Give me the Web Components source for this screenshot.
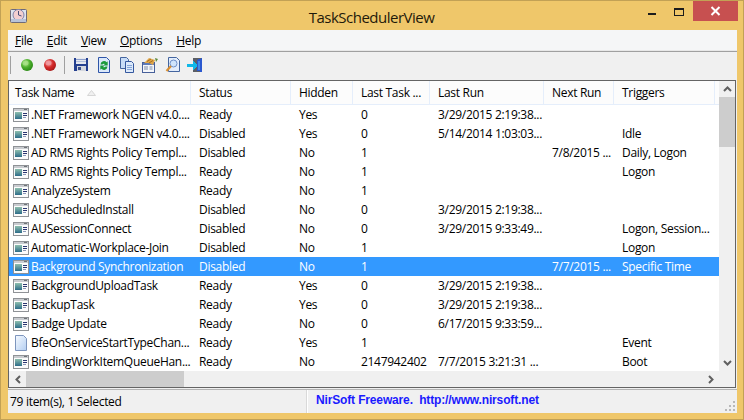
<!DOCTYPE html>
<html><head><meta charset="utf-8"><style>
html,body{margin:0;padding:0;background:#efc76a;overflow:hidden}
body{font:12px "Open Sans","Noto Sans","Liberation Sans",sans-serif;color:#000;letter-spacing:-.3px}
</style></head><body>
<app-window>
<title-bar slot="title">TaskSchedulerView</title-bar>
<menu-bar slot="menu"></menu-bar>
<tool-bar slot="tools"></tool-bar>
<task-list slot="list"></task-list>
<status-bar slot="status"></status-bar>
</app-window>
<script>
const ICON = {
 ball:(c1,c2,c3,h)=>`<svg width="14" height="14" viewBox="0 0 14 14"><defs><radialGradient id="g${c2.slice(1)}" cx=".38" cy=".34" r=".68"><stop offset="0" stop-color="${c1}"/><stop offset=".55" stop-color="${c2}"/><stop offset="1" stop-color="${c3}"/></radialGradient></defs><circle cx="7" cy="7" r="6" fill="url(#g${c2.slice(1)})"/><ellipse cx="5.500" cy="5" rx="3" ry="2.500" fill="${h}" opacity=".75"/></svg>`,
 save:`<svg width="16" height="15" viewBox="0 0 16 15" shape-rendering="crispEdges"><path d="M1 1h13l1 1v12H1z" fill="#25408f"/><rect x="3" y="1" width="10" height="6" fill="#e6e8ee"/><rect x="3" y="2" width="10" height="1" fill="#8ea0cc"/><rect x="3" y="4" width="10" height="1" fill="#b4c0dc"/><rect x="4" y="9" width="9" height="5" fill="#d4d7de"/><rect x="5" y="10" width="3" height="3" fill="#3a4f8c"/></svg>`,
 refresh:`<svg width="16" height="16" viewBox="0 0 16 16"><path d="M2.500 .5h8l3 3v12h-11z" fill="#dbe8fa" stroke="#2f55a8"/><path d="M4.500 7.500a3.600 3.600 0 0 1 6.200-2.300l1-1v4.300H7.400l1.500-1.400a1.900 1.900 0 0 0-2.500.4z" fill="#1c9a3c"/><path d="M11.500 9.500a3.600 3.600 0 0 1-6.200 2.300l-1 1V8.500h4.300l-1.500 1.400a1.900 1.900 0 0 0 2.500-.4z" fill="#1c9a3c"/></svg>`,
 copy:`<svg width="16" height="16" viewBox="0 0 16 16"><path d="M1.500 .5h6l2 2v9h-8z" fill="#c8dcf6" stroke="#44659f"/><path d="M6.500 4.500h6l2 2v9h-8z" fill="#dce9fa" stroke="#35589f"/><path d="M8 8.500h5M8 10.500h5M8 12.500h5" stroke="#86a6d8"/></svg>`,
 props:`<svg width="18" height="16" viewBox="0 0 18 16"><rect x="1.500" y="5.500" width="12" height="10" fill="#f4f6fa" stroke="#47609a"/><rect x="2" y="6" width="11" height="2" fill="#5d7ab8"/><path d="M3 10h4M3 12h4M8.500 10h3M8.500 12h3" stroke="#7a8aa8"/><path d="M3 6l5-5 6 2-2 5-4-2z" fill="#e0a648"/><path d="M6 4.500l4-2.500M8 6l4-2.500" stroke="#a86f1e"/><path d="M14 1l3 1-2 3z" fill="#5f8a3c"/></svg>`,
 find:`<svg width="16" height="16" viewBox="0 0 16 16"><path d="M3.500 .5h8l3 3v11h-11z" fill="#e3edfb" stroke="#44659f"/><circle cx="8.500" cy="6.500" r="3.500" fill="#cfe4fb" stroke="#6f90c8"/><path d="M6 9l-4.500 5" stroke="#d98f32" stroke-width="2.200"/></svg>`,
 exit:`<svg width="17" height="16" viewBox="0 0 17 16" shape-rendering="crispEdges"><rect x="6" y="1" width="9" height="14" fill="#5c5f66"/><path d="M10 3l5-2v14l-5-1z" fill="#2a58cf"/><rect x="11" y="4" width="2" height="9" fill="#3f8fe8"/><rect x="0" y="7" width="7" height="3" fill="#10b8e8"/><path d="M6 4h1v1h1v1h1v1h1v3H9v1H8v1H7v1H6z" fill="#10b8e8"/></svg>`,
 app:`<svg width="17" height="15" viewBox="0 0 17 15"><rect x=".5" y="1.500" width="16" height="13" rx="1" fill="#dfe4ee" stroke="#6e6a78"/><circle cx="8.500" cy="7" r="5.500" fill="#f3cfd0" stroke="#7f84a8"/><path d="M8.500 3v4l3 1" stroke="#4a4f78" fill="none"/><rect x="1" y="11" width="15" height="3" fill="#b9c3d8"/></svg>`,
 task:`<svg width="16" height="14" viewBox="0 0 16 14" shape-rendering="crispEdges"><defs><linearGradient id="t" x1="0" y1="0" x2="0" y2="1"><stop offset="0" stop-color="#8fbfae"/><stop offset="1" stop-color="#2c6c88"/></linearGradient></defs><rect width="16" height="14" fill="#8f9296"/><rect x="1" y="3" width="14" height="10" fill="#fbfbfb"/><rect x="1" y="1" width="14" height="2" fill="#c9ccd0"/><rect x="11" y="1" width="3" height="1" fill="#6f7378"/><rect x="2" y="4" width="7" height="7" fill="url(#t)"/><rect x="10" y="5" width="4" height="1" fill="#2a3570"/><rect x="10" y="7" width="4" height="1" fill="#2a3570"/><rect x="10" y="9" width="3" height="1" fill="#8a98b8"/></svg>`,
 doc:`<svg width="16" height="16" viewBox="0 0 16 16"><defs><linearGradient id="d" x1="0" y1="0" x2="1" y2="1"><stop offset="0" stop-color="#f6faff"/><stop offset="1" stop-color="#b4cff2"/></linearGradient></defs><path d="M2.500 .5h8l3 3v12h-11z" fill="url(#d)" stroke="#7d95bd"/></svg>`
};
function def(name, css, html, init){
 customElements.define(name, class extends HTMLElement{
  connectedCallback(){
   if(this.shadowRoot) return;
   const r=this.attachShadow({mode:'open'});
   r.innerHTML=`<style>${css}</style>`+(typeof html==='function'?html(this):html);
   if(init) init(r,this);
  }
 });
}
def('app-window',`:host{display:flex;flex-direction:column;box-sizing:border-box;width:744px;height:420px;background:#efc76a;border:1px solid #c2a155;padding:0 6px 6px 7px}
.client{display:flex;flex-direction:column;height:382px;background:#f0f0f0;}`,
`<slot name="title"></slot><div class="client"><slot name="menu"></slot><slot name="tools"></slot><slot name="list"></slot><slot name="status"></slot></div>`);
def('title-bar',`:host{display:flex;align-items:center;height:29px;position:relative;flex:none;font:15px "Open Sans","Noto Sans",sans-serif;color:#1f1a0a}
.ic{position:absolute;left:2px;top:7px;display:flex}
.t{flex:1;text-align:center;padding-top:2px;padding-right:2px;letter-spacing:-.5px}
.b{position:absolute;top:0;display:flex;align-items:center;justify-content:center}
.min{left:640px;top:12px;width:8px;height:2px;background:#1c1c1c}
.max{left:666px;top:7px;width:10px;height:8px;box-sizing:border-box;border:1px solid #1c1c1c;border-top-width:2px}
.close{right:-1px;width:45px;height:20px;background:#c75050}`,
`<span class="ic">${ICON.app}</span><span class="t"><slot></slot></span><span class="b min"></span><span class="b max"></span><span class="b close"><svg width="11" height="10" viewBox="0 0 11 10"><path d="M1.500 1l8 8M9.500 1l-8 8" stroke="#fff" stroke-width="2"/></svg></span>`);
def('menu-bar',`:host{display:flex;flex:none;box-sizing:border-box;height:22px;background:#f5f6f7;border-bottom:1px solid #a0a0a0;padding:1px 0 0 6px;gap:14px;box-shadow:inset 0 -1px 0 #e8e8e8;line-height:20px}
u{text-decoration:underline;text-underline-offset:1px}
span:nth-child(2){margin-left:1px}`,
()=>['File','Edit','View','Options','Help'].map(m=>`<span><u>${m[0]}</u>${m.slice(1)}</span>`).join(''));
def('tool-bar',`:host{display:flex;flex:none;align-items:center;box-sizing:border-box;height:28px;background:#f0f0f0;padding:0 0 3px 2px}
.sep{width:1px;height:18px;background:#a0a0a0;flex:none}
.i{display:flex;justify-content:center;align-items:center;width:23px;height:18px;flex:none}
.sp{flex:none}`,
`<span class="sep"></span><span class="sp" style="width:4px"></span><span class="i">${ICON.ball('#b8f090','#4cae2c','#2a8a14','#a8e088')}</span><span class="i">${ICON.ball('#f4a0a0','#d42a2a','#a81818','#f0a0a8')}</span><span class="sp" style="width:3px"></span><span class="sep"></span><span class="sp" style="width:4px"></span><span class="i">${ICON.save}</span><span class="i">${ICON.refresh}</span><span class="i">${ICON.copy}</span><span class="i">${ICON.props}</span><span class="i">${ICON.find}</span><span class="i">${ICON.exit}</span>`);
const COLS='182px 100px 62px 77px 114px 70px 101px';
const ROWS=[
['.NET Framework NGEN v4.0....','Ready','Yes','0','3/29/2015 2:19:38...','',''],
['.NET Framework NGEN v4.0....','Disabled','Yes','0','5/14/2014 1:03:03...','','Idle'],
['AD RMS Rights Policy Templ...','Disabled','No','1','','7/8/2015 ...','Daily, Logon'],
['AD RMS Rights Policy Templ...','Ready','No','1','','','Logon'],
['AnalyzeSystem','Ready','No','1','','',''],
['AUScheduledInstall','Disabled','No','0','3/29/2015 2:19:38...','',''],
['AUSessionConnect','Disabled','No','0','3/29/2015 9:33:49...','','Logon, Session...'],
['Automatic-Workplace-Join','Disabled','No','1','','','Logon'],
['Background Synchronization','Disabled','No','1','','7/7/2015 ...','Specific Time'],
['BackgroundUploadTask','Ready','Yes','0','3/29/2015 2:19:38...','',''],
['BackupTask','Ready','Yes','0','3/29/2015 2:19:38...','',''],
['Badge Update','Ready','No','0','6/17/2015 9:33:59...','',''],
['BfeOnServiceStartTypeChan...','Ready','Yes','1','','','Event','doc'],
['BindingWorkItemQueueHan...','Ready','No','2147942402','7/7/2015 3:21:31 ...','','Boot']];
def('task-row',`:host{display:grid;grid-template-columns:${COLS};width:710px;height:19px;line-height:19px;white-space:nowrap;flex:none}
:host([sel]){background:#3399ff;color:#fff}
span{padding-left:8px;overflow:hidden}
.n{display:flex;align-items:center;padding-left:4px;gap:1px;overflow:visible}
.n svg{display:block}.k{display:flex;width:16px;flex:none;margin-right:1px}`,
h=>{const d=JSON.parse(h.dataset.r);return `<span class="n"><i class="k">${d[7]?ICON.doc:ICON.task}</i>${d[0]}</span>`+d.slice(1,7).map(x=>`<span>${x}</span>`).join('')});
def('task-list',`:host{display:grid;grid-template-columns:710px 16px;grid-template-rows:24px 266px 16px;box-sizing:border-box;flex:none;width:728px;height:308px;border:1px solid #646464;background:#fff}
.head{display:grid;grid-template-columns:${COLS};background:#fcfcfc;box-shadow:inset 0 -1px 0 #e5eefb;line-height:23px;white-space:nowrap;overflow:hidden}
.head span{padding-left:8px;border-right:1px solid #e5eefb;position:relative;height:24px;box-sizing:border-box;overflow:hidden}
.head span:first-child{padding-left:6px}
.head .s{position:absolute;left:78px;top:9px}
.rows{display:flex;flex-direction:column;overflow:hidden}
.v{grid-row:1/3;grid-column:2;background:#f0f0f0;display:flex;flex-direction:column;align-items:stretch}
.btn{display:flex;align-items:center;justify-content:center;flex:none}
.v .btn{height:16px}.v .th{height:50px;background:#cdcdcd;flex:none}.v .sp{flex:1}
.h{background:#f0f0f0;display:flex;height:16px;grid-column:1/3}
.h .btn{width:17px}.h .th{width:158px;background:#cdcdcd}.h .sp{flex:1}`,
()=>`<div class="head" style="grid-column:1">${['Task Name','Status','Hidden','Last Task ...','Last Run','Next Run','Triggers'].map((c,i)=>`<span>${c}${i==0?'<svg class="s" width="9" height="6" viewBox="0 0 9 6"><path d="M4.500 .5L8.500 5.500H.5z" fill="#f0f0f0" stroke="#d6d6d6"/></svg>':''}</span>`).join('')}</div>
<div class="v"><span class="btn"><svg width="9" height="6" viewBox="0 0 9 6"><path d="M1 5l3.500-3.500L8 5" fill="none" stroke="#606060" stroke-width="2"/></svg></span><span class="th"></span><span class="sp"></span><span class="btn"><svg width="9" height="6" viewBox="0 0 9 6"><path d="M1 1l3.500 3.500L8 1" fill="none" stroke="#606060" stroke-width="2"/></svg></span></div>
<div class="rows" id="rows" style="grid-row:2;grid-column:1"></div>
<div class="h" style="grid-row:3"><span class="btn"><svg width="6" height="9" viewBox="0 0 6 9"><path d="M5 1L1.500 4.500 5 8" fill="none" stroke="#606060" stroke-width="2"/></svg></span><span class="th"></span><span class="sp"></span><span class="btn" style="margin-right:16px"><svg width="6" height="9" viewBox="0 0 6 9"><path d="M1 1l3.500 3.500L1 8" fill="none" stroke="#606060" stroke-width="2"/></svg></span></div>`,
(r)=>{const box=r.getElementById('rows');ROWS.forEach((d,i)=>{const e=document.createElement('task-row');e.dataset.r=JSON.stringify(d);if(i==8)e.setAttribute('sel','');box.appendChild(e)})});
def('status-bar',`:host{display:flex;flex:none;box-sizing:border-box;height:24px;margin-top:1px;border-top:1px solid #b4b4b4;background:#f0f0f0;line-height:23px;position:relative;white-space:nowrap}
.a{width:299px;padding-left:2px;box-sizing:border-box;border-right:1px solid #d9d9d9;box-shadow:1px 0 0 #fff}
.b{padding-left:9px;color:#1a1aff;font:700 12px "Liberation Sans",Arial,sans-serif;line-height:21px;white-space:pre;letter-spacing:-.15px}
.g{position:absolute;right:1px;bottom:1px;display:flex}`,
`<span class="a">79 item(s), 1 Selected</span><span class="b">NirSoft Freeware.  http://www.nirsoft.net</span><span class="g"><svg width="11" height="11" viewBox="0 0 11 11" shape-rendering="crispEdges" fill="#b8b8b8"><rect x="8" y="0" width="2" height="2"/><rect x="4" y="4" width="2" height="2"/><rect x="8" y="4" width="2" height="2"/><rect x="0" y="8" width="2" height="2"/><rect x="4" y="8" width="2" height="2"/><rect x="8" y="8" width="2" height="2"/></svg></span>`);
</script>
</body></html>
